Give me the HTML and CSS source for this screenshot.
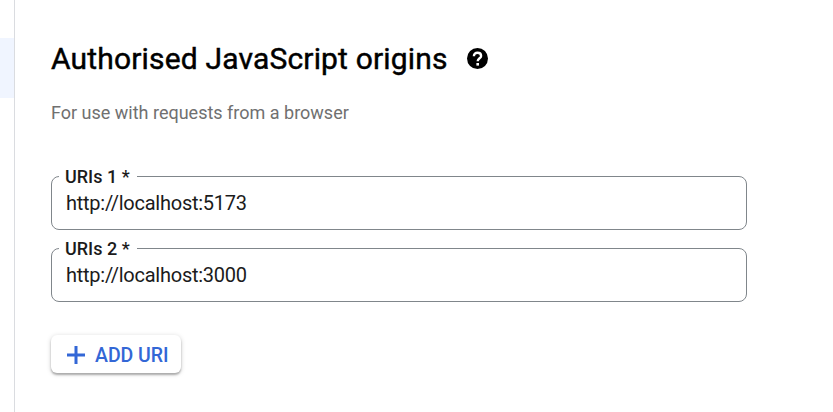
FILE: index.html
```html
<!DOCTYPE html>
<html lang="en-GB">
<head>
<meta charset="utf-8">
<title>Authorised JavaScript origins</title>
<link rel="stylesheet" href="styles.css">
</head>
<body>
<div class="layout">
  <nav class="rail"><div class="rail-selected"></div></nav>
  <main class="content">
    <h2 class="title"><span class="title-text">Authorised JavaScript origins</span>
      <svg class="help" viewBox="0 0 21 21"><circle cx="10.500" cy="10.500" r="10.500"/><path class="mark" d="M6.900 8.200C6.900 5.900 8.400 4.700 10.500 4.700S14.100 6 14.100 7.900C14.100 10.300 10.700 10.300 10.700 13.300"/><path class="dot" d="M9.400 15h2.600v2.600H9.400z"/></svg>
    </h2>
    <p class="hint">For use with requests from a browser</p>
    <fieldset class="field"><legend class="label">URIs 1 *</legend><div class="value">http://localhost:5173</div></fieldset>
    <fieldset class="field"><legend class="label">URIs 2 *</legend><div class="value">http://localhost:3000</div></fieldset>
    <button class="add"><svg class="plus" viewBox="0 0 18 18"><path d="M9 0v18M0 9h18"/></svg><span>ADD URI</span></button>
  </main>
</div>
</body>
</html>
```
FILE: styles.css
```css
* { box-sizing: border-box; }
body { margin: 0; background: #fff; color: #1b1b1b; font-family: Roboto, sans-serif; }
.layout { display: flex; height: 412px; overflow: hidden; }
.rail { width: 15px; border-right: 1px solid #dadce0; padding-top: 38px; }
.rail-selected { height: 60px; background: #f0f5ff; }
.content { width: 732px; padding: 39px 0 0 36px; }
.title { display: flex; align-items: center; margin: 0; height: 39px; font-size: 30px; font-weight: 400; color: #000; white-space: nowrap; }
.title-text { width: 416px; letter-spacing: 0.17px; -webkit-text-stroke: 0.45px #000; }
.help { width: 21px; height: 21px; fill: #000; }
.mark { fill: none; stroke: #fff; stroke-width: 2.4; }
.dot { fill: #fff; }
.hint { margin: 23px 0 0; height: 24px; line-height: 24px; font-size: 18px; color: #707070; }
.field { margin: 42px 0 0; padding: 0 14px; height: 63px; min-width: 0; border: 1px solid #80868b; border-radius: 8px; }
.field + .field { margin-top: 9px; }
.label { margin-left: -7px; padding: 0 7px 0 6px; height: 18px; line-height: 20px; font-size: 18px; font-weight: 500; }
.value { height: 24px; line-height: 24px; margin-top: 6px; font-size: 20px; letter-spacing: -0.25px; }
.add { display: flex; align-items: center; gap: 10px; width: 130px; height: 38px; margin-top: 33px; padding: 2px 0 0 16px; border: 0; border-radius: 6px; background: #fff; color: #3367d6; font: 500 19.5px Roboto, sans-serif; letter-spacing: -0.05px; white-space: nowrap; box-shadow: 0 2px 2px rgba(0,0,0,.25), 0 1px 5px rgba(0,0,0,.18); }
.plus { width: 18px; height: 18px; fill: none; stroke: currentColor; stroke-width: 3; }
```
